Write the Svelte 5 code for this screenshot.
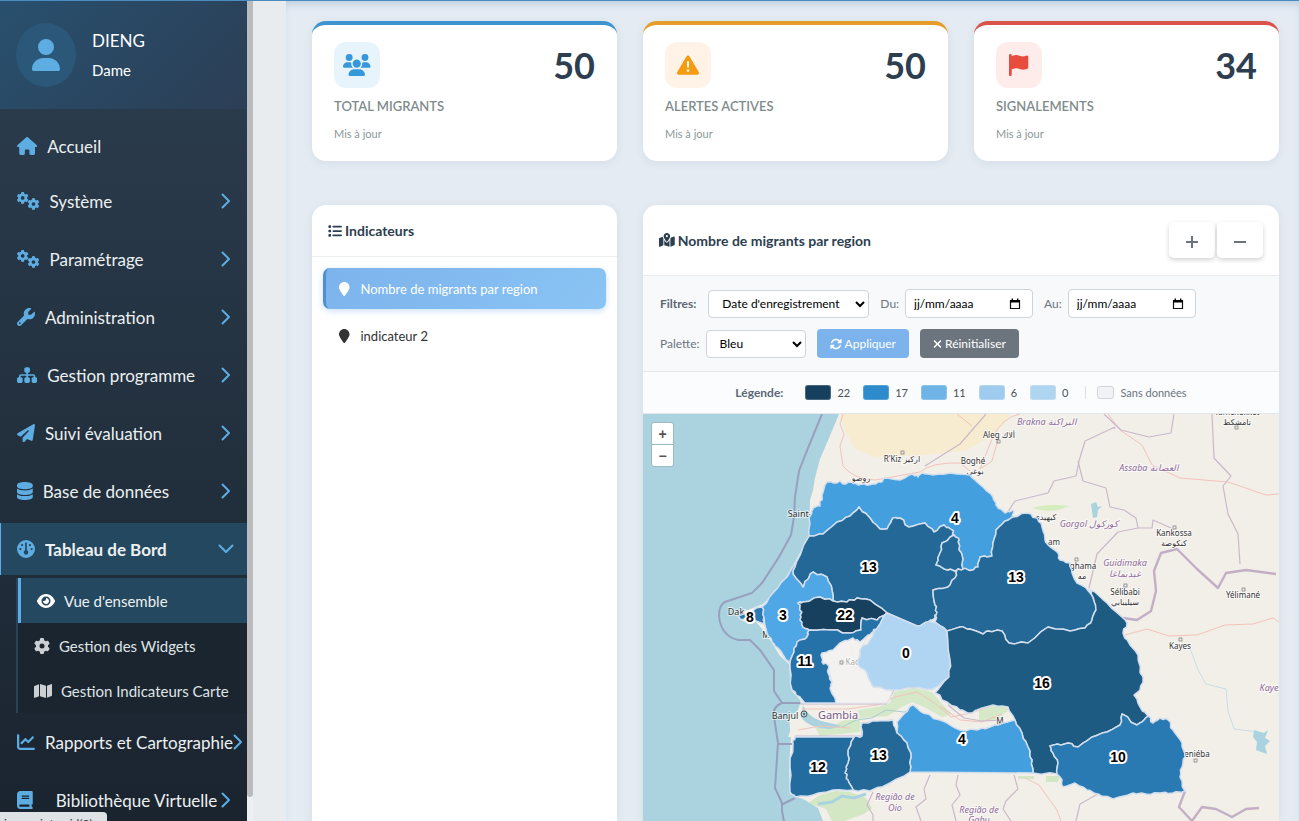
<script lang="ts">
  type Point = [number, number];

  const gear = 'M495.9 166.6c3.2 8.7 .5 18.4-6.4 24.6l-43.3 39.4c1.1 8.3 1.7 16.8 1.7 25.4s-.6 17.1-1.7 25.4l43.3 39.4c6.9 6.2 9.6 15.9 6.4 24.6c-4.4 11.9-9.7 23.3-15.8 34.3l-4.7 8.1c-6.6 11-14 21.4-22.1 31.2c-5.9 7.2-15.7 9.6-24.5 6.8l-55.7-17.7c-13.4 10.3-28.2 18.9-44 25.4l-12.5 57.1c-2 9.1-9 16.3-18.2 17.8c-13.8 2.3-28 3.5-42.5 3.5s-28.7-1.2-42.5-3.5c-9.2-1.5-16.2-8.7-18.2-17.8l-12.5-57.1c-15.8-6.5-30.6-15.1-44-25.4L83.1 425.9c-8.8 2.8-18.6 .3-24.5-6.8c-8.1-9.8-15.5-20.2-22.1-31.2l-4.7-8.1c-6.1-11-11.4-22.4-15.8-34.3c-3.2-8.7-.5-18.4 6.4-24.6l43.3-39.4C64.6 273.1 64 264.6 64 256s.6-17.1 1.7-25.4L22.4 191.2c-6.9-6.2-9.6-15.9-6.4-24.6c4.4-11.9 9.7-23.3 15.8-34.3l4.7-8.1c6.6-11 14-21.4 22.1-31.2c5.9-7.2 15.7-9.6 24.5-6.8l55.7 17.7c13.4-10.3 28.2-18.9 44-25.4l12.5-57.1c2-9.1 9-16.3 18.2-17.8C227.3 1.2 241.5 0 256 0s28.7 1.2 42.5 3.5c9.2 1.5 16.2 8.7 18.2 17.8l12.5 57.1c15.8 6.5 30.6 15.1 44 25.4l55.7-17.7c8.8-2.8 18.6-.3 24.5 6.8c8.1 9.8 15.5 20.2 22.1 31.2l4.7 8.1c6.1 11 11.4 22.4 15.8 34.3zM256 336a80 80 0 1 0 0-160 80 80 0 1 0 0 160z';

  // width of the 512-high viewBox, then the path
  const icons: Record<string, [number, string]> = {
    house: [576, 'M575.8 255.5c0 18-15 32.1-32 32.1h-32l.7 160.2c0 2.7-.2 5.4-.5 8.1V472c0 22.1-17.9 40-40 40H392c-22.1 0-40-17.9-40-40V384c0-17.7-14.3-32-32-32H256c-17.7 0-32 14.3-32 32v88c0 22.1-17.9 40-40 40H104c-22.1 0-40-17.9-40-40V287.6H32c-18 0-32-14-32-32.1c0-9 3-17 10-24L266.4 8c7-7 15-8 22-8s15 2 21 7L564.8 231.5c8 7 12 15 11 24z'],
    user: [448, 'M224 256A128 128 0 1 0 224 0a128 128 0 1 0 0 256zm-45.7 48C79.8 304 0 383.8 0 482.3C0 498.7 13.3 512 29.7 512H418.3c16.4 0 29.7-13.3 29.7-29.7C448 383.8 368.2 304 269.7 304H178.3z'],
    gear: [512, gear],
    wrench: [512, 'M352 320c88.4 0 160-71.6 160-160c0-15.3-2.2-30.1-6.2-44.2c-3.1-10.8-16.4-13.2-24.3-5.3l-76.8 76.8c-3 3-7.1 4.7-11.3 4.7H336c-8.8 0-16-7.2-16-16V118.6c0-4.2 1.7-8.3 4.7-11.3l76.8-76.8c7.9-7.9 5.4-21.2-5.3-24.3C382.1 2.2 367.3 0 352 0C263.6 0 192 71.6 192 160c0 19.1 3.4 37.5 9.5 54.5L19.9 396.1C7.2 408.8 0 426.1 0 444.1C0 481.6 30.4 512 67.9 512c18 0 35.3-7.2 48-19.9L297.5 310.5c17 6.2 35.4 9.5 54.5 9.5zM80 408a24 24 0 1 1 0 48 24 24 0 1 1 0-48z'],
    sitemap: [576, 'M208 80c0-26.5 21.5-48 48-48h64c26.5 0 48 21.5 48 48v64c0 26.5-21.5 48-48 48h-8v40H464c30.9 0 56 25.1 56 56v32h8c26.5 0 48 21.5 48 48v64c0 26.5-21.5 48-48 48H464c-26.5 0-48-21.5-48-48V368c0-26.5 21.5-48 48-48h8V288c0-4.4-3.6-8-8-8H312v40h8c26.5 0 48 21.5 48 48v64c0 26.5-21.5 48-48 48H256c-26.5 0-48-21.5-48-48V368c0-26.5 21.5-48 48-48h8V280H112c-4.4 0-8 3.6-8 8v32h8c26.5 0 48 21.5 48 48v64c0 26.5-21.5 48-48 48H48c-26.5 0-48-21.5-48-48V368c0-26.5 21.5-48 48-48h8V288c0-30.9 25.1-56 56-56H264V192h-8c-26.5 0-48-21.5-48-48V80z'],
    plane: [512, 'M498.1 5.6c10.1 7 15.4 19.1 13.5 31.2l-64 416c-1.5 9.7-7.4 18.2-16 23s-18.9 5.4-28 1.6L284 427.7l-68.5 74.1c-8.9 9.7-22.9 12.9-35.2 8.1S160 493.2 160 480V396.4c0-4 1.5-7.8 4.2-10.7L331.8 202.8c5.8-6.3 5.6-16-.4-22s-15.7-6.4-22-.7L106 360.8 17.7 316.6C7.1 311.3 .3 300.7 0 288.9s5.9-22.8 16.1-28.7l448-256c10.7-6.1 23.9-5.5 34 1.4z'],
    database: [448, 'M448 80v48c0 44.2-100.3 80-224 80S0 172.2 0 128V80C0 35.8 100.3 0 224 0S448 35.8 448 80zM393.2 214.7c20.8-7.4 39.9-16.9 54.8-28.6V288c0 44.2-100.3 80-224 80S0 332.2 0 288V186.1c14.9 11.8 34 21.2 54.8 28.6C99.7 230.7 159.5 240 224 240s124.3-9.3 169.2-25.3zM0 346.1c14.9 11.8 34 21.2 54.8 28.6C99.7 390.7 159.5 400 224 400s124.3-9.3 169.2-25.3c20.8-7.4 39.9-16.9 54.8-28.6V432c0 44.2-100.3 80-224 80S0 476.2 0 432V346.1z'],
    gauge: [512, 'M0 256a256 256 0 1 1 512 0A256 256 0 1 1 0 256zm320 96c0-26.9-16.5-49.9-40-59.3V88c0-13.3-10.7-24-24-24s-24 10.7-24 24V292.7c-23.5 9.5-40 32.5-40 59.3c0 35.3 28.7 64 64 64s64-28.7 64-64zM144 176a32 32 0 1 0 0-64 32 32 0 1 0 0 64zm-16 80a32 32 0 1 0 -64 0 32 32 0 1 0 64 0zm288 32a32 32 0 1 0 0-64 32 32 0 1 0 0 64zM400 144a32 32 0 1 0 -64 0 32 32 0 1 0 64 0z'],
    eye: [576, 'M288 32c-80.8 0-145.5 36.8-192.6 80.6C48.6 156 17.3 208 2.5 243.7c-3.3 7.9-3.3 16.7 0 24.6C17.3 304 48.6 356 95.4 399.4C142.5 443.2 207.2 480 288 480s145.5-36.8 192.6-80.6c46.8-43.5 78.1-95.4 93-131.1c3.3-7.9 3.3-16.7 0-24.6c-14.9-35.7-46.2-87.7-93-131.1C433.5 68.8 368.8 32 288 32zM144 256a144 144 0 1 1 288 0 144 144 0 1 1 -288 0zm144-64c0 35.3-28.7 64-64 64c-7.1 0-13.9-1.2-20.3-3.3c-5.5-1.8-11.9 1.6-11.7 7.4c.3 6.9 1.3 13.8 3.2 20.7c13.7 51.2 66.4 81.6 117.6 67.9s81.6-66.4 67.9-117.6c-11.1-41.5-47.8-69.4-88.6-71.1c-5.8-.2-9.2 6.1-7.4 11.7c2.1 6.4 3.3 13.2 3.3 20.3z'],
    map: [576, 'M384 476.1L192 421.2V35.9L384 90.8V476.1zm32-1.2V88.4L543.1 37.5c15.8-6.3 32.9 5.3 32.9 22.3V394.6c0 9.8-6 18.6-15.1 22.3L416 474.8zM15.1 95.1L160 37.2V423.6L32.9 474.5C17.1 480.8 0 469.2 0 452.2V117.4c0-9.8 6-18.6 15.1-22.3z'],
    chart: [512, 'M64 64c0-17.7-14.3-32-32-32S0 46.3 0 64V400c0 44.2 35.8 80 80 80H480c17.7 0 32-14.3 32-32s-14.3-32-32-32H80c-8.8 0-16-7.2-16-16V64zm406.6 86.6c12.5-12.5 12.5-32.8 0-45.3s-32.8-12.5-45.3 0L320 210.7l-57.4-57.4c-12.5-12.5-32.8-12.5-45.3 0l-112 112c-12.5 12.5-12.5 32.8 0 45.3s32.8 12.5 45.3 0L240 221.3l57.4 57.4c12.5 12.5 32.8 12.5 45.3 0l128-128z'],
    book: [448, 'M96 0C43 0 0 43 0 96V416c0 53 43 96 96 96H384h32c17.7 0 32-14.3 32-32s-14.3-32-32-32V384c17.7 0 32-14.3 32-32V32c0-17.7-14.3-32-32-32H384 96zm0 384H352v64H96c-17.7 0-32-14.3-32-32s14.3-32 32-32zm32-240c0-8.8 7.2-16 16-16H336c8.8 0 16 7.2 16 16s-7.2 16-16 16H144c-8.8 0-16-7.2-16-16zm16 48H336c8.8 0 16 7.2 16 16s-7.2 16-16 16H144c-8.8 0-16-7.2-16-16s7.2-16 16-16z'],
    users: [640, 'M144 0a80 80 0 1 1 0 160A80 80 0 1 1 144 0zM512 0a80 80 0 1 1 0 160A80 80 0 1 1 512 0zM0 298.7C0 239.8 47.8 192 106.7 192h42.7c15.9 0 31 3.5 44.6 9.7c-1.3 7.2-1.9 14.7-1.9 22.3c0 38.2 16.8 72.5 43.3 96c-.2 0-.4 0-.7 0H21.3C9.6 320 0 310.4 0 298.7zM405.3 320c-.2 0-.4 0-.7 0c26.6-23.5 43.3-57.8 43.3-96c0-7.6-.7-15-1.9-22.3c13.6-6.3 28.7-9.7 44.6-9.7h42.7C592.2 192 640 239.8 640 298.7c0 11.8-9.6 21.3-21.3 21.3H405.3zM224 224a96 96 0 1 1 192 0 96 96 0 1 1 -192 0zM128 485.3C128 411.7 187.7 352 261.3 352H378.7C452.3 352 512 411.7 512 485.3c0 14.7-11.9 26.7-26.7 26.7H154.7c-14.7 0-26.7-11.9-26.7-26.7z'],
    warning: [512, 'M256 32c14.2 0 27.3 7.5 34.5 19.8l216 368c7.3 12.4 7.3 27.7 .2 40.1S486.3 480 472 480H40c-14.3 0-27.6-7.7-34.7-20.1s-7-27.8 .2-40.1l216-368C228.7 39.5 241.8 32 256 32zm0 128c-13.3 0-24 10.7-24 24V296c0 13.3 10.7 24 24 24s24-10.7 24-24V184c0-13.3-10.7-24-24-24zm32 224a32 32 0 1 0 -64 0 32 32 0 1 0 64 0z'],
    flag: [448, 'M64 32C64 14.3 49.7 0 32 0S0 14.3 0 32V64 368 480c0 17.7 14.3 32 32 32s32-14.3 32-32V352l64.3-16.1c41.1-10.3 84.6-5.5 122.5 13.4c44.2 22.1 95.5 24.8 141.7 7.4l34.7-13c12.5-4.7 20.8-16.6 20.8-30V66.1c0-23-24.2-38-44.8-27.7l-9.6 4.8c-46.3 23.2-100.8 23.2-147.1 0c-35.1-17.6-75.4-22-113.5-12.5L64 48V32z'],
    list: [512, 'M40 48C26.7 48 16 58.7 16 72v48c0 13.3 10.7 24 24 24H88c13.3 0 24-10.7 24-24V72c0-13.3-10.7-24-24-24H40zM192 64c-17.7 0-32 14.3-32 32s14.3 32 32 32H480c17.7 0 32-14.3 32-32s-14.3-32-32-32H192zm0 160c-17.7 0-32 14.3-32 32s14.3 32 32 32H480c17.7 0 32-14.3 32-32s-14.3-32-32-32H192zm0 160c-17.7 0-32 14.3-32 32s14.3 32 32 32H480c17.7 0 32-14.3 32-32s-14.3-32-32-32H192zM16 232v48c0 13.3 10.7 24 24 24H88c13.3 0 24-10.7 24-24V232c0-13.3-10.7-24-24-24H40c-13.3 0-24 10.7-24 24zM40 368c-13.3 0-24 10.7-24 24v48c0 13.3 10.7 24 24 24H88c13.3 0 24-10.7 24-24V392c0-13.3-10.7-24-24-24H40z'],
    pin: [384, 'M384 192c0 87.4-117 243-168.3 307.2c-12.3 15.3-35.1 15.3-47.4 0C117 435 0 279.4 0 192C0 86 86 0 192 0S384 86 384 192z'],
    mapDot: [576, 'M408 120c0 54.6-73.1 151.9-105.2 192c-7.7 9.6-22 9.6-29.6 0C241.1 271.9 168 174.6 168 120C168 53.7 221.7 0 288 0s120 53.7 120 120zm8 80.4c3.5-6.9 6.7-13.8 9.6-20.6c.5-1.2 1-2.5 1.5-3.7l116-46.4C558.9 123.4 576 135 576 152V422.8c0 9.8-6 18.6-15.1 22.3L416 503V200.4zM137.6 138.3c2.4 14.1 7.2 28.3 12.8 41.5c2.9 6.8 6.1 13.7 9.6 20.6V451.8L32.9 502.7C17.1 509 0 497.4 0 480.4V209.6c0-9.8 6-18.6 15.1-22.3l122.6-49zM327.8 332c13.9-17.4 35.7-45.7 56.2-77V504.3L192 449.4V255c20.5 31.3 42.3 59.6 56.2 77c20.5 25.6 59.1 25.6 79.6 0zM288 152a40 40 0 1 0 0-80 40 40 0 1 0 0 80z'],
    sync: [512, 'M142.9 142.9c62.2-62.2 162.7-62.5 225.3-1L327 183c-6.9 6.9-8.9 17.2-5.2 26.2s12.5 14.8 22.2 14.8H472c13.3 0 24-10.7 24-24V72c0-9.7-5.8-18.5-14.8-22.2s-19.3-1.7-26.2 5.2L413.4 96.6c-87.6-86.5-228.7-86.2-315.8 1C73.2 122 55.6 150.7 44.8 181.4c-5.9 16.7 2.9 34.9 19.5 40.8s34.9-2.9 40.8-19.5c7.7-21.8 20.2-42.3 37.8-59.8zM16 312V440c0 9.7 5.8 18.5 14.8 22.2s19.3 1.7 26.2-5.2l41.6-41.6c87.6 86.5 228.7 86.2 315.8-1c24.4-24.4 42.1-53.1 52.9-83.7c5.9-16.7-2.9-34.9-19.5-40.8s-34.9 2.9-40.8 19.5c-7.7 21.8-20.2 42.3-37.8 59.8c-62.2 62.2-162.7 62.5-225.3 1L185 329c6.9-6.9 8.9-17.2 5.2-26.2s-12.5-14.8-22.2-14.8H40c-13.3 0-24 10.7-24 24z'],
    cross: [384, 'M342.6 150.6c12.5-12.5 12.5-32.8 0-45.3s-32.8-12.5-45.3 0L192 210.7 86.6 105.4c-12.5-12.5-32.8-12.5-45.3 0s-12.5 32.8 0 45.3L146.7 256 41.4 361.4c-12.5 12.5-12.5 32.8 0 45.3s32.8 12.5 45.3 0L192 301.3 297.4 406.6c12.5 12.5 32.8 12.5 45.3 0s12.5-32.8 0-45.3L237.3 256 342.6 150.6z'],
  };

  const menu = [
    { label: 'Accueil', icon: 'house', leaf: true },
    { label: 'Système', icon: 'gears' },
    { label: 'Paramétrage', icon: 'gears' },
    { label: 'Administration', icon: 'wrench' },
    { label: 'Gestion programme', icon: 'sitemap' },
    { label: 'Suivi évaluation', icon: 'plane' },
    { label: 'Base de données', icon: 'database' },
    {
      label: 'Tableau de Bord',
      icon: 'gauge',
      open: true,
      children: [
        { label: "Vue d'ensemble", icon: 'eye', active: true },
        { label: 'Gestion des Widgets', icon: 'gear' },
        { label: 'Gestion Indicateurs Carte', icon: 'map' },
      ],
    },
    { label: 'Rapports et Cartographie', icon: 'chart' },
    { label: 'Bibliothèque Virtuelle', icon: 'book', wide: true },
  ];

  const stats = [
    { label: 'TOTAL MIGRANTS', value: 50, icon: 'users', tone: 'blue' },
    { label: 'ALERTES ACTIVES', value: 50, icon: 'warning', tone: 'orange' },
    { label: 'SIGNALEMENTS', value: 34, icon: 'flag', tone: 'red' },
  ];

  const indicators = ['Nombre de migrants par region', 'indicateur 2'];
  let selected = $state(0);

  const legend = [
    { value: 22, color: '#17405e' },
    { value: 17, color: '#2e8bcb' },
    { value: 11, color: '#6fb4e6' },
    { value: 6, color: '#9fccee' },
    { value: 0, color: '#afd5f0' },
  ];

  const regions = [
    { name: 'Saint-Louis', value: 4, at: [955, 518], color: '#449fdf', pts: '809,536 809,518 814,507 820,506 822,495 827,482 837,483 840,481 843,484 852,482 858,485 873,484 882,482 884,478 900,480 912,474 918,477 922,473 933,475 950,473 970,475 975,480 983,487 993,497 996,505 1005,513 1013,510 1013,517 1005,521 996,530 993,543 992,556 980,557 978,567 972,570 963,569 962,555 959,548 959,540 954,535 952,530 944,525 934,532 925,523 909,527 900,518 893,518 889,525 887,529 880,529 870,518 859,507 850,516 837,522 823,534' },
    { name: 'Louga', value: 13, at: [869, 567], color: '#236896', pts: '809,536 823,534 837,522 850,516 859,507 870,518 880,529 887,529 889,525 893,518 900,518 909,527 925,523 934,532 944,525 952,530 954,535 942,543 940,553 936,565 948,570 957,570 955,578 948,587 933,590 935,605 937,612 935,618 928,622 917,626 887,613 870,600 857,598 847,602 833,601 832,590 827,577 813,572 807,580 803,587 793,574 796,563' },
    { name: 'Ranérou', value: 0, color: '#236896', pts: '954,535 942,543 940,553 936,565 948,570 957,570 963,569 962,555 959,548 959,540' },
    { name: 'Matam', value: 13, at: [1016, 577], color: '#236896', pts: '963,569 972,570 978,567 980,557 992,556 993,543 996,530 1005,521 1013,517 1027,513 1037,518 1042,527 1045,540 1048,545 1058,553 1060,560 1070,563 1072,573 1077,583 1086,588 1093,597 1096,610 1092,620 1085,628 1070,631 1048,627 1028,643 1009,643 1002,631 988,631 983,634 970,629 960,627 947,631 935,622 937,612 935,605 933,590 948,587 955,578 957,570' },
    { name: 'Dakar', value: 8, at: [750, 617], color: '#2a78b4', pts: '738,616 748,612 762,607 764,617 763,624 756,621 748,618 742,620' },
    { name: 'Thiès', value: 3, at: [783, 615], color: '#50a7e5', pts: '796,563 793,574 803,587 807,580 813,572 827,577 832,590 833,601 820,597 803,602 798,603 802,612 800,620 803,627 809,630 807,637 797,642 794,652 790,663 785,658 778,648 772,642 767,633 764,617 762,607 773,593 787,577' },
    { name: 'Diourbel', value: 22, at: [845, 615], color: '#17405e', pts: '798,603 803,602 820,597 833,601 847,602 857,598 870,600 887,613 877,620 862,618 861,630 850,633 830,630 809,630 803,627 800,620 802,612' },
    { name: 'Fatick', value: 11, at: [805, 661], color: '#2572a9', pts: '809,630 830,630 850,633 861,630 862,618 877,620 887,613 878,627 873,632 868,635 860,642 853,638 840,643 833,650 822,653 822,662 828,665 828,673 832,682 830,688 836,703 805,703 800,697 792,690 790,668 790,663 794,652 797,642 807,637' },
    { name: 'Kaffrine', value: 0, at: [906, 653], color: '#afd5f2', pts: '887,613 917,626 928,622 935,622 947,631 950,660 949,677 933,689 913,688 893,690 873,687 867,673 858,665 860,650 870,640 878,627' },
    { name: 'Tambacounda', value: 16, at: [1042, 683], color: '#1e5b82', pts: '947,631 960,627 970,629 983,634 988,631 1002,631 1009,643 1028,643 1048,627 1070,631 1085,628 1092,620 1096,610 1093,597 1089,589 1096,593 1107,603 1123,618 1127,623 1123,633 1130,645 1138,655 1140,672 1143,678 1140,690 1134,695 1140,707 1148,716 1142,722 1137,725 1122,714 1120,725 1107,732 1092,737 1078,747 1068,743 1050,746 1053,753 1058,763 1057,774 1033,773 1032,760 1028,747 1022,733 1015,720 1008,707 993,705 977,710 970,713 960,710 947,702 935,693 949,677 950,660' },
    { name: 'Kédougou', value: 10, at: [1118, 757], color: '#2979b2', pts: '1050,746 1053,753 1058,763 1057,774 1060,777 1063,787 1075,783 1087,790 1098,794 1113,799 1133,793 1146,794 1160,793 1173,793 1185,791 1180,777 1182,767 1185,757 1182,743 1173,730 1168,720 1160,718 1153,723 1148,716 1142,722 1137,725 1122,714 1120,725 1107,732 1092,737 1078,747 1068,743' },
    { name: 'Kolda', value: 4, at: [962, 739], color: '#449fdf', pts: '897,722 905,713 913,705 923,713 940,720 960,730 977,730 990,727 1003,723 1015,720 1022,733 1028,747 1032,760 1033,773 910,772 911,757 907,743 897,733' },
    { name: 'Sédhiou', value: 13, at: [879, 755], color: '#236896', pts: '862,723 878,721 893,720 897,733 907,743 911,757 910,772 890,783 870,791 853,790 848,780 845,773 848,763 848,750 854,737 862,736' },
    { name: 'Ziguinchor', value: 12, at: [818, 767], color: '#236c9f', pts: '795,737 854,737 848,750 848,763 845,773 848,780 853,790 833,790 813,795 795,797 790,792 790,767 793,743' },
  ];

  const places = [
    { text: 'Saint-L', x: 802, y: 517, kind: 'city' },
    { text: "R'Kiz اركيز", x: 902, y: 462, kind: 'town' },
    { text: 'روصو', x: 861, y: 481, kind: 'town' },
    { text: 'Aleg ألاك', x: 999, y: 438, kind: 'town' },
    { text: 'Boghé', x: 973, y: 464, kind: 'town' },
    { text: 'بوغى', x: 975, y: 474, kind: 'town' },
    { text: 'Brakna البراكنة', x: 1047, y: 425, kind: 'area' },
    { text: 'Assaba العصابة', x: 1149, y: 471, kind: 'area' },
    { text: 'Gorgol كوركول', x: 1089, y: 527, kind: 'area' },
    { text: 'Guidimaka', x: 1125, y: 566, kind: 'area' },
    { text: 'غيديماغا', x: 1125, y: 577, kind: 'area' },
    { text: 'Tamchekket', x: 1237, y: 415, kind: 'town' },
    { text: 'تامشكط', x: 1237, y: 425, kind: 'town' },
    { text: 'كيهيدي', x: 1045, y: 520, kind: 'town' },
    { text: 'Kankossa', x: 1174, y: 536, kind: 'town' },
    { text: 'كنكوصة', x: 1174, y: 546, kind: 'town' },
    { text: 'am', x: 1054, y: 545, kind: 'town' },
    { text: 'ghama', x: 1083, y: 569, kind: 'town' },
    { text: 'مه', x: 1082, y: 579, kind: 'town' },
    { text: 'Sélibabi', x: 1125, y: 595, kind: 'town' },
    { text: 'سيليبابي', x: 1125, y: 605, kind: 'town' },
    { text: 'Yélimané', x: 1243, y: 598, kind: 'town' },
    { text: 'Kayes', x: 1180, y: 649, kind: 'town' },
    { text: 'Kayes', x: 1271, y: 691, kind: 'area' },
    { text: 'eniéba', x: 1197, y: 757, kind: 'town' },
    { text: 'Kaolack', x: 860, y: 665, kind: 'faded' },
    { text: 'Banjul', x: 785, y: 719, kind: 'city' },
    { text: 'Gambia', x: 838, y: 719, kind: 'country' },
    { text: 'M', x: 766, y: 638, kind: 'town' },
    { text: 'Dak', x: 736, y: 615, kind: 'city' },
    { text: 'M', x: 1000, y: 724, kind: 'town' },
    { text: 'Região de', x: 895, y: 800, kind: 'area' },
    { text: 'Oio', x: 895, y: 811, kind: 'area' },
    { text: 'Região de', x: 979, y: 813, kind: 'area' },
    { text: 'Gabu', x: 979, y: 823, kind: 'area' },
  ];

  const dots: Point[] = [[902, 452], [998, 441], [1236, 427], [1174, 527], [1076, 559], [1125, 585], [1243, 589], [1180, 639], [1195, 760], [841, 662]];

  // Breaks short edges with a small kink. The kink depends only on the two
  // ends, so neighbouring regions still share the same border.
  function ragged(pts: string) {
    const list = pts.split(' ').map((p) => p.split(',').map(Number) as Point);
    const out: string[] = [];
    list.forEach(([x, y], i) => {
      const [nx, ny] = list[(i + 1) % list.length];
      out.push(`${x},${y}`);
      const len = Math.hypot(nx - x, ny - y);
      if (len > 5 && len < 30) {
        const seed = (x + nx) * 13 + (y + ny) * 7;
        for (const t of [1 / 3, 2 / 3]) {
          // measure from the lower-left end so both directions agree
          const flip = x > nx || (x === nx && y > ny);
          const k = flip ? 1 - t : t;
          const px = x + (nx - x) * t;
          const py = y + (ny - y) * t;
          out.push(`${(px + Math.sin(seed + Math.round(k * 3) * 2)).toFixed(1)},${(py + Math.cos(seed * 2 + Math.round(k * 3) * 3)).toFixed(1)}`);
        }
      }
    });
    return out.join(' ');
  }
</script>

{#snippet icon(name: string, size: string)}
  {#if name === 'gears'}
    <svg class="icon {size}" viewBox="0 0 640 512" aria-hidden="true">
      <path transform="translate(-8 0) scale(.66)" d={gear} />
      <path transform="translate(300 172) scale(.66)" d={gear} />
    </svg>
  {:else}
    <svg class="icon {size}" viewBox="0 0 {icons[name][0]} 512" aria-hidden="true"><path d={icons[name][1]} /></svg>
  {/if}
{/snippet}

{#snippet dateField(id: string, label: string)}
  <div class="field">
    <label for={id}>{label}</label>
    <span class="date">
      <input {id} type="text" placeholder="jj/mm/aaaa" />
      <svg viewBox="0 0 12 12" aria-hidden="true">
        <path d="M1.5 2.5h9v8h-9z" fill="none" stroke="#111" stroke-width="1.2" />
        <path d="M1 2h10v2.4H1zM2.6 .6h1.4V2H2.6zM8 .6h1.4V2H8z" />
      </svg>
    </span>
  </div>
{/snippet}

<div class="app">
  <div class="body">
    <aside class="sidebar">
      <div class="profile">
        <div class="avatar">{@render icon('user', 'xl')}</div>
        <div>
          <div class="surname">DIENG</div>
          <div class="firstname">Dame</div>
        </div>
      </div>
      <nav>
        <ul class="menu">
          {#each menu as item}
            <li class:leaf={item.leaf}>
              <a href="#{item.icon}" class="link" class:open={item.open} class:wide={item.wide}>
                {@render icon(item.icon, 'md')}
                <span>{item.label}</span>
                {#if !item.leaf}
                  <svg class="chevron" viewBox="0 0 10 16" aria-hidden="true"><path d="M1.5 1.5 8 8l-6.500 6.500" /></svg>
                {/if}
              </a>
              {#if item.children}
                <ul class="submenu">
                  {#each item.children as child}
                    <li><a href="#{child.icon}" class="sublink" class:active={child.active}>{@render icon(child.icon, 'sm')}<span>{child.label}</span></a></li>
                  {/each}
                </ul>
              {/if}
            </li>
          {/each}
        </ul>
      </nav>
    </aside>
    <div class="scrollbar"><div class="thumb"></div></div>

    <main>
      {#each stats as stat}
        <section class="card stat {stat.tone}">
          <div class="stat-top">
            <div class="badge">{@render icon(stat.icon, 'lg')}</div>
            <div class="stat-value">{stat.value}</div>
          </div>
          <div class="stat-label">{stat.label}</div>
          <div class="stat-sub">Mis à jour</div>
        </section>
      {/each}

      <section class="card panel indicators">
        <h2>{@render icon('list', 'xs')} Indicateurs</h2>
        <div class="choices">
          {#each indicators as name, i}
            <button type="button" class="choice" class:active={selected === i} onclick={() => (selected = i)}>
              {@render icon('pin', 'xs')}<span>{name}</span>
            </button>
          {/each}
        </div>
      </section>

      <section class="card panel map-card">
        <header>
          <h2>{@render icon('mapDot', 'xs')} Nombre de migrants par region</h2>
          <div class="tools">
            <button type="button" aria-label="Agrandir"><svg viewBox="0 0 14 14"><path d="M1 7h12M7 1v12" /></svg></button>
            <button type="button" aria-label="Réduire"><svg viewBox="0 0 14 14"><path d="M1 7h12" /></svg></button>
          </div>
        </header>

        <div class="filters">
          <div class="row">
            <div class="field">
              <label for="filter" class="strong">Filtres:</label>
              <select id="filter" class="filter"><option>Date d'enregistrement</option></select>
            </div>
            {@render dateField('from', 'Du:')}
            {@render dateField('to', 'Au:')}
          </div>
          <div class="row">
            <div class="field">
              <label for="palette">Palette:</label>
              <select id="palette" class="palette"><option>Bleu</option></select>
            </div>
            <button type="button" class="btn apply">{@render icon('sync', 'xxs')} Appliquer</button>
            <button type="button" class="btn reset">{@render icon('cross', 'xxs')} Réinitialiser</button>
          </div>
        </div>

        <div class="legend">
          <strong>Légende:</strong>
          {#each legend as step}
            <span class="step"><i style="background:{step.color}"></i>{step.value}</span>
          {/each}
          <span class="step none"><i></i>Sans données</span>
        </div>

        <div class="map">
          <svg viewBox="643 414 636 407" preserveAspectRatio="xMinYMin slice" role="img" aria-label="Nombre de migrants par region">
            <rect x="643" y="414" width="900" height="700" fill="#aad3df" />
            <path class="land" d="M839 414 829 438 820 459 815 478 813 490 810 500 809 536 795 562 780 587 763 604 745 611 737 616 742 621 756 622 763 630 772 643 780 656 789 664 791 690 800 700 804 708 796 712 789 718 791 737 789 765 790 794 805 800 818 808 823 821 1400 821 1400 414z" />
            <path fill="#f7ecd0" d="M840 414 845 430 855 449 875 457 925 455 965 451 985 440 1003 425 1010 414z" />
            <path fill="#cdebb0" opacity=".8" d="M1032 508q16-5 38-2l-12 4q-14 2-26-2z" />
            <path fill="#c6e4b5" opacity=".7" d="M808 803l12-8 16-4 14 1 16 6 6 10-8 6-20 7h-12l-6-12zM1046 776h14l-2 6h-12zM1018 776h16v3h-16z" />
            <path fill="none" stroke="#aad3df" stroke-width="3" d="m818 804 14-2 10-6 12 2 12-4" />
            <path fill="#aad3df" d="m1091 504 5-2 2 5 4-1-4 4-1 7-4 1zM1254 730l10 3 4-3-3 8 5 3-5 5 2 8-6-2-5-2 1-8-4-5z" />

            <!-- maritime limit and roads -->
            <g class="limit">
              <path d="m822 414-14 34-9 23-4 26-1 20-3 18-12 22-17 26-10 10-27 9q-6 3-6 14 2 20 19 24h12l10 10 14 20v21l8 12q-10 4-8 14l4 26-3 45 7 15v8l3 16" />
              <path d="M782 703h18M777 744h15M781 805l14-7" />
            </g>
            <g class="road">
              <path d="m843 414-3 10 4 10-4 12 3 20q10 13 32 14l45-8q12-10 40-9l10 8" />
              <path d="m957 414 15 12M999 436l-7 25-12 8 12-30q10-22 28-25M1108 414l12 16 22 15 10 20 28 13 48 4 38 13 13-1" />
              <path d="m1125 635 22-6 22 7 28-1 28-10 28-1 20-6 6 4M1025 778l14 7 18 25 4 11" />
              <path d="m828 665 14-6 30 20M842 662l-10 12M850 643l4 15" />
            </g>

            <!-- administrative borders -->
            <g class="border">
              <path d="m986 414-26 30-35 22M1115 427l-30 14-6 20-3 15-22 5-6 12-33 8-8 12" />
              <path d="m1104 414 17 16 28 7 22-4 3-19M1078 461l5 20 23 7 4 19 14 3 12 8 2 10h14l1-8 18 8M1115 427l-1 2M1212 414l2 44 17 18-8 10 5 28 10 20 2 30M1138 528l-20 4-21 22-8 34" />
              <path d="m1014 775 4 14-12 12-3 8 8 12M930 775l-6 14 2 10-10 8 5 14M958 775l-2 10 4 10-8 10 4 16M1098 794l-18 10-4 17M873 792l-6 13 6 10v6" />
            </g>
            <g class="border thick">
              <path d="m1123 618 14 2 14-9 5-20-2-20 7-18 16-4 20 20 21 19 8-15 20-3 30 4M1185 791l-6 16 13 14 10-14 14 2 16 8 14-8 13-1" />
            </g>
            <path fill="none" stroke="#aad3df" opacity=".6" d="m1190 648 8 22 8 14 20 5 2 22 6 18 24 3" />

            <!-- The Gambia -->
            <path class="land" d="M800 704h86l8-14 40-2 14 14 22 12 30-7 10 8-8 12-30 4-40-11-20-13-14 5-16 11h-22v14h-72z" />
            <path fill="#cde6bf" opacity=".8" d="m812 722 20 4 10-5 18-3v14l-40 4zM858 710l20-3 12-4 4-11 20-4 18 4 10 12 10 10-10 3-18-10-12-5-12 6-12 8-28 2zM979 708l26-3 4 5-14 10-16 2z" />
            <path fill="#aad3df" d="M803 705q6 15 27 18l12 3-12 3q-22-1-29-12z" />
            <path fill="none" stroke="#a9cbd0" stroke-width="1" d="m842 727 14-7 16-2 14-8 18 2 14-4" />
            <path class="road" d="M802 709h45l30-4 18-8 22-5 16 10 18 15 20-4 20-7M798 730l22-4 30 2M940 706l20 14 22 2 20-8" />
            <path class="border" d="M800 704h86l8-14M795 736h67v-13l30-3M948 705l16 13 18 3 22-1" />

            <path fill="#f5f3f2" opacity=".85" stroke="#dfe5ee" d="m822 653 18-10 13-5 7 4 8-7-8 15-2 15 9 8 6 14 20 3-5 13h-52l-6-15 2-6-4-17-6-3z" />

            {#each places as place}
              <text class={place.kind} x={place.x} y={place.y}>{place.text}</text>
            {/each}
            {#each dots as [x, y]}
              <rect x={x - 1} y={y - 1} width="3" height="3" fill="none" stroke="#777" stroke-width=".7" />
            {/each}
            <circle cx="804" cy="714" r="3" fill="none" stroke="#555" /><circle cx="804" cy="714" r="1" fill="#555" />

            {#each regions as region}
              <polygon class="region" points={ragged(region.pts)} fill={region.color}><title>{region.name}</title></polygon>
            {/each}
            {#each regions as region}
              {#if region.at}
                <text class="count" x={region.at[0]} y={region.at[1] + 5}>{region.value}</text>
              {/if}
            {/each}
          </svg>
          <div class="zoom">
            <button type="button" aria-label="Zoom avant">+</button>
            <button type="button" aria-label="Zoom arrière">−</button>
          </div>
        </div>
      </section>
    </main>
  </div>
  <div class="status">javascript:void(0);</div>
</div>

<style>
  :global(body) {
    font-family: Lato, "Noto Sans", sans-serif;
    color: #2c3e50;
  }
  .app {
    position: relative;
    height: 100vh;
    overflow: hidden;
    box-sizing: border-box;
    border-top: 1px solid #4a8cc0;
    font-size: 14px;
  }
  .body {
    display: flex;
    height: 100%;
  }
  button, select, input {
    font: inherit;
    box-sizing: border-box;
  }
  ul {
    list-style: none;
    margin: 0;
    padding: 0;
  }
  .icon {
    fill: currentColor;
    flex: none;
  }
  .xxs { height: 12px; }
  .xs { height: 14px; }
  .sm { height: 16px; }
  .md { height: 18px; }
  .lg { height: 22px; }
  .xl { height: 32px; }

  /* sidebar */
  .sidebar {
    width: 247px;
    flex: none;
    overflow: hidden;
    background: linear-gradient(180deg, #2c3e50, #1a242f);
  }
  .profile {
    display: flex;
    align-items: center;
    gap: 16px;
    height: 108px;
    padding: 0 16px;
    box-sizing: border-box;
    color: #fff;
    background: linear-gradient(135deg, #28506e, #2c3e55);
  }
  .avatar {
    display: grid;
    place-items: center;
    width: 60px;
    height: 64px;
    border-radius: 50%;
    color: #5dade2;
    background: #2b5878;
  }
  .surname {
    font-size: 17px;
    line-height: 24px;
  }
  .firstname {
    margin-top: 5px;
    font-size: 15px;
    line-height: 24px;
  }
  .menu {
    padding-top: 11px;
  }
  .menu > li {
    margin-bottom: 6px;
  }
  .menu > li.leaf,
  .menu > li:has(.submenu) {
    margin-bottom: 3px;
  }
  .link, .sublink {
    display: flex;
    align-items: center;
    color: #ecf0f1;
    text-decoration: none;
    white-space: nowrap;
  }
  .link {
    gap: 10px;
    height: 52px;
    padding: 0 16px 0 17px;
    font-size: 17px;
  }
  .link .icon {
    color: #5dade2;
  }
  .link.wide .icon {
    margin-right: 13px;
  }
  .link.open {
    padding-left: 16px;
    border-left: 1px solid #5dade2;
    font-weight: 700;
    background: #244860;
  }
  .chevron {
    flex: none;
    width: 10px;
    height: 16px;
    margin-left: auto;
    fill: none;
    stroke: #5dade2;
    stroke-width: 2;
    stroke-linecap: round;
    stroke-linejoin: round;
  }
  .link:not(.open) span {
    margin-right: -10px;
  }
  .open .chevron {
    transform: rotate(90deg);
  }
  .submenu {
    margin: 3px 0 0 16px;
    border-left: 2px solid #24445c;
    background: #1b252f;
  }
  .sublink {
    gap: 9px;
    height: 45px;
    padding-left: 16px;
    font-size: 15px;
    color: #dfe3e6;
  }
  .sublink .icon {
    color: #ccd0d4;
  }
  .sublink.active {
    border-left: 3px solid #5dade2;
    color: #ecf0f1;
    background: #244860;
  }
  .sublink.active .icon {
    color: #fff;
  }
  .scrollbar {
    flex: none;
    width: 6px;
    padding-bottom: 24px;
    background: #edf0f1;
  }
  .thumb {
    height: 100%;
    border-radius: 0 0 3px 3px;
    background: #b9bbbc;
  }

  /* content */
  main {
    flex: 1;
    min-width: 0;
    display: grid;
    grid-template-columns: repeat(3, minmax(0, 1fr));
    grid-template-rows: auto minmax(0, 1fr);
    gap: 44px 26px;
    padding: 20px 20px 0 26px;
    border-left: 33px solid #e9ecee;
    background: #e4ebf3;
    box-shadow: inset 0 6px 8px -4px #b4c6d6;
  }
  .card {
    border-radius: 14px;
    background: #fff;
    box-shadow: 0 2px 10px rgba(44, 62, 80, 0.08);
  }
  /* the panels run on below the fold */
  .panel {
    border-radius: 14px 14px 0 0;
  }
  .stat {
    height: 140px;
    box-sizing: border-box;
    padding: 17px 22px 0;
    border-top: 4px solid;
  }
  .stat-top {
    display: flex;
    align-items: center;
    justify-content: space-between;
  }
  .badge {
    display: grid;
    place-items: center;
    width: 46px;
    height: 46px;
    border-radius: 12px;
  }
  .blue { border-color: #3f93d0; }
  .orange { border-color: #e59c28; }
  .red { border-color: #d9534a; }
  .blue .badge { color: #3498db; background: #e8f4fb; }
  .orange .badge { color: #f39c12; background: #fef3e6; }
  .red .badge { color: #e74c3c; background: #fdecea; }
  .stat-value {
    font-size: 36px;
    font-weight: 700;
    line-height: 44px;
  }
  .stat-label {
    margin-top: 8px;
    font-size: 13px;
    font-weight: 600;
    line-height: 20px;
    color: #7f8c8d;
  }
  .stat-sub {
    margin-top: 10px;
    font-size: 11px;
    line-height: 16px;
    color: #8b9798;
  }
  h2 {
    display: flex;
    align-items: center;
    gap: 3px;
    margin: 0;
    font-size: 14px;
    font-weight: 700;
  }
  .indicators h2 {
    height: 51px;
    padding: 0 16px;
    border-bottom: 1px solid #ecf0f1;
  }
  .choices {
    display: grid;
    gap: 6px;
    padding: 11px;
  }
  .choice {
    display: flex;
    align-items: center;
    gap: 11px;
    height: 41px;
    padding: 0 13px;
    border: 0;
    border-left: 3px solid transparent;
    border-radius: 7px;
    font-size: 13px;
    color: #333;
    background: none;
  }
  .choice.active {
    border-color: #4f8fd6;
    color: #fff;
    background: linear-gradient(135deg, #7cb3ec, #8ac4f4);
    box-shadow: 0 2px 6px rgba(124, 179, 236, 0.4);
  }
  .map-card {
    grid-column: span 2;
    display: flex;
    flex-direction: column;
    overflow: hidden;
  }
  header {
    display: flex;
    align-items: center;
    justify-content: space-between;
    height: 70px;
    padding: 0 16px;
  }
  .tools {
    display: flex;
    gap: 2px;
  }
  .tools button {
    width: 46px;
    height: 36px;
    padding: 0;
    border: 0;
    border-radius: 5px;
    background: #fff;
    box-shadow: 0 2px 5px rgba(0, 0, 0, 0.18);
  }
  .tools svg {
    width: 14px;
    height: 14px;
    stroke: #6c757d;
    stroke-width: 2;
    vertical-align: middle;
  }
  .filters {
    display: grid;
    gap: 11px;
    padding: 13px 17px;
    border-top: 1px solid #e9ecef;
    font-size: 12px;
    color: #6c757d;
    background: #f8f9fb;
  }
  .row, .field {
    display: flex;
    align-items: center;
    gap: 11px;
  }
  .field {
    gap: 6px;
  }
  .field .strong {
    margin-right: 6px;
    font-weight: 700;
    color: #5a6875;
  }
  select, .date {
    border: 1px solid #ced4da;
    border-radius: 4px;
    background: #fff;
    color: #000;
  }
  select {
    height: 28px;
    padding: 0 9px;
  }
  .filter { width: 161px; }
  .palette { width: 100px; }
  .date {
    display: flex;
    align-items: center;
    width: 128px;
    height: 29px;
    padding: 0 11px 0 8px;
    box-sizing: border-box;
  }
  .date input {
    flex: 1;
    min-width: 0;
    padding: 0;
    border: 0;
    background: none;
  }
  .date input::placeholder {
    color: #000;
  }
  .date svg {
    width: 12px;
    height: 12px;
  }
  .btn {
    display: flex;
    align-items: center;
    gap: 3px;
    height: 29px;
    padding: 0 13px;
    border: 0;
    border-radius: 4px;
    color: #fff;
  }
  .apply { background: #7cb3ec; }
  .reset { background: #6c757d; }
  .legend {
    display: flex;
    align-items: center;
    justify-content: center;
    gap: 13px;
    height: 41px;
    border-top: 1px solid #e3e7eb;
    border-bottom: 1px solid #e3e7eb;
    font-size: 11px;
    color: #495057;
    background: #fafcfe;
  }
  .legend strong {
    margin-right: 9px;
    font-size: 12px;
    color: #5a6875;
  }
  .step {
    display: flex;
    align-items: center;
    gap: 6px;
  }
  .step i {
    width: 26px;
    height: 15px;
    border-radius: 3px;
    box-shadow: inset 0 0 0 1px rgba(255, 255, 255, 0.2);
  }
  .step.none {
    margin-left: 4px;
    padding-left: 11px;
    border-left: 1px solid #dee2e6;
    color: #6c757d;
  }
  .none i {
    box-sizing: border-box;
    width: 17px;
    height: 13px;
    border: 1px solid #cfd2d6;
    background: #f1f2f6;
  }

  /* map */
  .map {
    position: relative;
    flex: 1;
    min-height: 0;
  }
  .map > svg {
    display: block;
    width: 100%;
    height: 100%;
  }
  .land { fill: #f2efe9; }
  .limit, .border, .road { fill: none; }
  .limit { stroke: #9596b8; stroke-width: 2; opacity: 0.85; }
  .border { stroke: #c9b8cb; stroke-width: 1.2; stroke-linejoin: round; }
  .thick { stroke: #c2afc6; stroke-width: 2.4; }
  .road { stroke: #f2c3b9; stroke-width: 1; stroke-linejoin: round; }
  .region {
    stroke: #d3dfee;
    stroke-width: 1.5;
    stroke-linejoin: round;
  }
  .map text {
    text-anchor: middle;
    paint-order: stroke;
    stroke: rgba(255, 255, 255, 0.6);
    stroke-width: 2;
    font: 8px "Noto Sans", "DejaVu Sans", sans-serif;
    fill: #333;
  }
  .map text.area {
    font-size: 9px;
    font-style: italic;
    fill: #8d6a98;
  }
  .map text.country {
    font-size: 11px;
    fill: #7a5a85;
  }
  .map text.city {
    font-size: 9px;
  }
  .map text.faded {
    fill: #aaa;
  }
  .map text.count {
    font: bold 14px "Liberation Sans", Arial, sans-serif;
    stroke: #fff;
    stroke-width: 4;
    stroke-linejoin: round;
    fill: #000;
  }
  .zoom {
    position: absolute;
    top: 8px;
    left: 8px;
    display: grid;
    gap: 1px;
    border: 1px solid #9fb9c2;
    border-radius: 3px;
    overflow: hidden;
    background: #9fb9c2;
  }
  .zoom button {
    width: 21px;
    height: 21px;
    padding: 0;
    border: 0;
    font: bold 14px "Liberation Sans", sans-serif;
    color: #555;
    background: #fff;
  }
  .status {
    position: absolute;
    left: 0;
    bottom: -12px;
    width: 107px;
    height: 21px;
    padding: 4px 4px 0;
    box-sizing: border-box;
    border-radius: 0 4px 0 0;
    font-size: 12px;
    line-height: 16px;
    color: #3c4043;
    background: #dee1e6;
  }
</style>
